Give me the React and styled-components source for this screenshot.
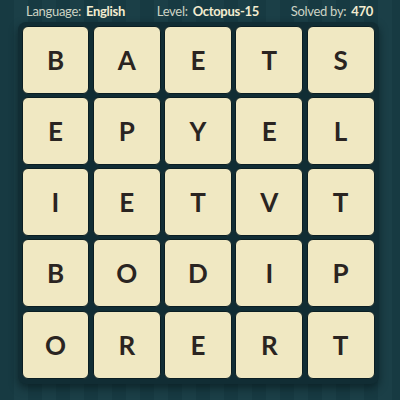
import React from 'react';
import styled, { createGlobalStyle } from 'styled-components';

const letters = [
  ['B', 'A', 'E', 'T', 'S'],
  ['E', 'P', 'Y', 'E', 'L'],
  ['I', 'E', 'T', 'V', 'T'],
  ['B', 'O', 'D', 'I', 'P'],
  ['O', 'R', 'E', 'R', 'T'],
];

const GlobalStyle = createGlobalStyle`
  html, body {
    margin: 0;
    padding: 0;
  }
  body {
    width: 400px;
    height: 400px;
    overflow: hidden;
    background-color: #173a42;
    background-image: repeating-linear-gradient(
      90deg,
      #173a42 0px,
      #173a42 14px,
      #1b3f47 14px,
      #1b3f47 28px
    );
    font-family: 'Lato', 'Liberation Sans', sans-serif;
  }
`;

const Page = () => (
  <Wrapper>
    <GlobalStyle />
    <Header>
      <Info>
        Language: <b>English</b>
      </Info>
      <Info>
        Level: <b>Octopus-15</b>
      </Info>
      <Info>
        Solved by: <b>470</b>
      </Info>
    </Header>
    <Board>
      {letters.flat().map((l, i) => (
        <Tile key={i}>{l}</Tile>
      ))}
    </Board>
  </Wrapper>
);

const Wrapper = styled.div`
  width: 400px;
  height: 400px;
  display: flex;
  flex-direction: column;
`;

const Header = styled.div`
  height: 22px;
  display: flex;
  align-items: center;
  justify-content: space-between;
  padding: 0 27px 0 26px;
`;

const Info = styled.span`
  font-size: 13px;
  color: #cdd3c4;
  letter-spacing: -0.3px;

  b {
    font-weight: 700;
    color: #f3ecd0;
    margin-left: 2px;
  }
`;

const Board = styled.div`
  margin-left: 18px;
  width: 353px;
  padding: 3.5px 4px 5px 3.5px;
  background: #112d34;
  border-radius: 8px;
  box-shadow: 0 4px 8px rgba(5, 20, 24, 0.6);
  display: grid;
  grid-template-columns: repeat(5, 1fr);
  grid-auto-rows: 68px;
  gap: 3.3px;
`;

const Tile = styled.div`
  background: #f0e8c2;
  border: 1px solid #0b1e22;
  border-radius: 6px;
  display: flex;
  align-items: center;
  justify-content: center;
  font-family: 'Lato', 'Liberation Sans', sans-serif;
  font-weight: 700;
  font-size: 26px;
  color: #2a2421;
  box-sizing: border-box;
`;

export default Page;
